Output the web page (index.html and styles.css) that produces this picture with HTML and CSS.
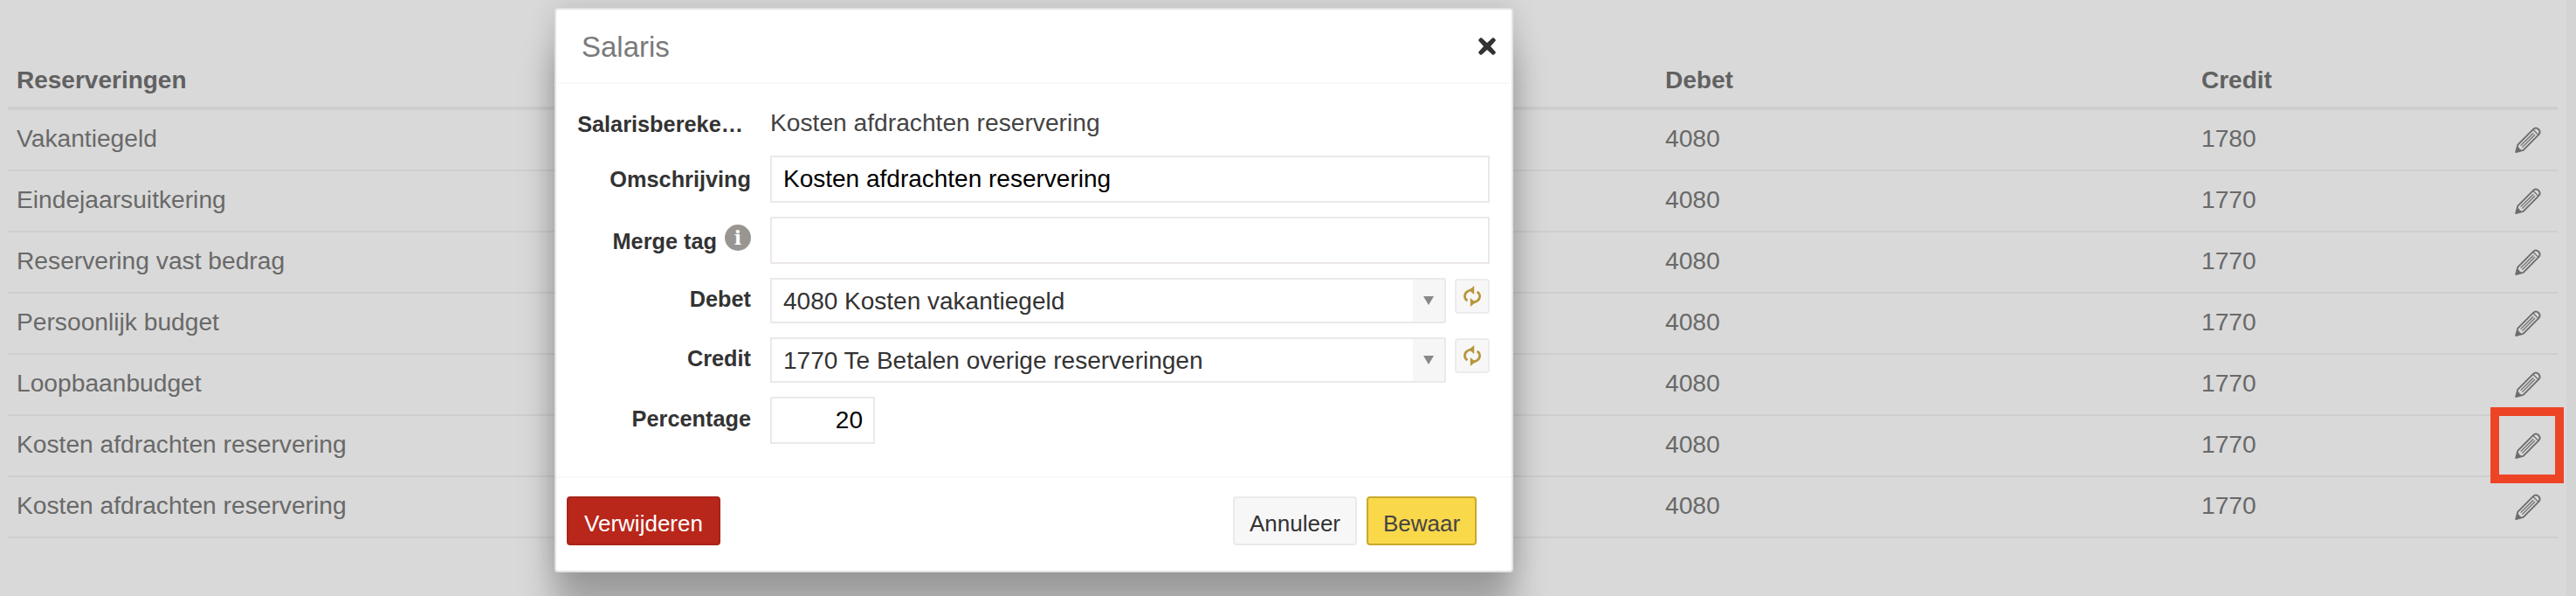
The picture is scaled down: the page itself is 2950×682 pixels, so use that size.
FILE: index.html
```html
<!DOCTYPE html>
<html lang="nl">
<head>
<meta charset="utf-8">
<title>Salaris</title>
<link rel="stylesheet" href="styles.css">
</head>
<body>
<svg class="sprites" width="0" height="0" aria-hidden="true">
  <symbol id="pencil" viewBox="0 0 30 30">
    <path d="M1.2 29 3.4 20.6 20.8 3.2C22.6 1.4 25.2 1.2 27.2 3 29 5 28.8 7.6 27 9.4L9.6 26.8Z" fill="none" stroke="currentColor" stroke-width="1.9" stroke-linejoin="round"/>
    <path d="M6.6 21.6 21.2 7.2M8.4 23.6 23 9M20.8 3.2 27 9.4" fill="none" stroke="currentColor" stroke-width="1.3"/>
    <path d="M1.2 29 2.6 23.4 4.6 23.4 5.6 25.4 7 26 7 27.6Z" fill="currentColor"/>
  </symbol>
  <symbol id="sync" viewBox="0 0 20 24">
    <path d="M11.5 5C6 4.4 1.4 7.4 1.4 12 1.4 14.2 2.4 15.8 4.4 17.2M8.5 19C14 19.6 18.6 16.6 18.6 12 18.6 9.8 17.6 8.2 15.6 6.8" fill="none" stroke="currentColor" stroke-width="2.7"/>
    <path d="M12.2 0 6.2 5 12.2 10ZM7.8 14 13.8 19 7.8 24Z" fill="currentColor"/>
  </symbol>
</svg>

<main class="page">
  <div class="table">
    <div class="row head"><span>Reserveringen</span><span>Debet</span><span>Credit</span><span></span></div>
    <div class="row"><span>Vakantiegeld</span><span>4080</span><span>1780</span><svg class="pencil"><use href="#pencil"/></svg></div>
    <div class="row"><span>Eindejaarsuitkering</span><span>4080</span><span>1770</span><svg class="pencil"><use href="#pencil"/></svg></div>
    <div class="row"><span>Reservering vast bedrag</span><span>4080</span><span>1770</span><svg class="pencil"><use href="#pencil"/></svg></div>
    <div class="row"><span>Persoonlijk budget</span><span>4080</span><span>1770</span><svg class="pencil"><use href="#pencil"/></svg></div>
    <div class="row"><span>Loopbaanbudget</span><span>4080</span><span>1770</span><svg class="pencil"><use href="#pencil"/></svg></div>
    <div class="row"><span>Kosten afdrachten reservering</span><span>4080</span><span>1770</span><svg class="pencil"><use href="#pencil"/></svg></div>
    <div class="row"><span>Kosten afdrachten reservering</span><span>4080</span><span>1770</span><svg class="pencil"><use href="#pencil"/></svg></div>
  </div>
</main>

<div class="overlay"></div>
<div class="highlight"></div>

<section class="modal">
  <header class="modal-head">
    <h2>Salaris</h2>
    <svg class="close" viewBox="0 0 20 20"><path d="M4 .6 10 6 16 .6C16.6 0 17.4 0 18 .6L19.4 2C20 2.6 20 3.4 19.4 4L14 10 19.4 16C20 16.6 20 17.4 19.4 18L18 19.4C17.4 20 16.6 20 16 19.4L10 14 4 19.4C3.4 20 2.6 20 2 19.4L.6 18C0 17.4 0 16.6.6 16L6 10 .6 4C0 3.4 0 2.6.6 2L2 .6C2.6 0 3.4 0 4 .6Z" fill="currentColor"/></svg>
  </header>
  <div class="modal-body">
    <div class="field static">
      <label class="truncated">Salarisbereke…</label>
      <div class="value">Kosten afdrachten reservering</div>
    </div>
    <div class="field">
      <label>Omschrijving</label>
      <div class="input">Kosten afdrachten reservering</div>
    </div>
    <div class="field">
      <label class="merge">Merge tag <span class="info">i</span></label>
      <div class="input"></div>
    </div>
    <div class="field pick">
      <label>Debet</label>
      <div class="select"><span>4080 Kosten vakantiegeld</span><i class="arrow"></i></div>
      <button class="sync"><svg><use href="#sync"/></svg></button>
    </div>
    <div class="field pick">
      <label>Credit</label>
      <div class="select"><span>1770 Te Betalen overige reserveringen</span><i class="arrow"></i></div>
      <button class="sync"><svg><use href="#sync"/></svg></button>
    </div>
    <div class="field percent">
      <label>Percentage</label>
      <div class="input number">20</div>
    </div>
  </div>
  <footer class="modal-foot">
    <button class="btn danger">Verwijderen</button>
    <div class="foot-right">
      <button class="btn plain">Annuleer</button>
      <button class="btn primary">Bewaar</button>
    </div>
  </footer>
</section>
</body>
</html>
```
FILE: styles.css
```css
* { box-sizing: border-box; }
html, body { margin: 0; height: 100%; }
body {
  width: 2950px;
  height: 682px;
  overflow: hidden;
  background: #fff;
  font-family: "Liberation Sans", Arial, sans-serif;
  font-size: 28px;
  position: relative;
}
.sprites { position: absolute; }

.page { padding: 0 21px 0 9px; }
.page::after {
  content: "";
  position: absolute;
  top: 0; right: 0; bottom: 0;
  width: 11px;
  background: #fafafa;
}
.table { display: flex; flex-direction: column; }
.row {
  display: grid;
  grid-template-columns: 1888px 614px 1fr 49px;
  align-items: center;
  height: 70px;
  padding: 0 0 0 10px;
  border-bottom: 2px solid #f3f3f3;
  color: #7c7c7c;
  font-size: 28.2px;
}
.row > span { padding-bottom: 4px; }
.row.head {
  height: 126px;
  padding-top: 66px;
  padding-bottom: 4px;
  border-bottom: 4px solid #f3f3f3;
  font-weight: bold;
  color: #727272;
  font-size: 28px;
}
.row.head > span { padding-bottom: 0; }
.pencil { width: 30px; height: 30px; color: #808080; }

.overlay { position: absolute; inset: 0; background: rgba(0,0,0,.15); }
.highlight {
  position: absolute;
  left: 2852px; top: 466px;
  width: 84px; height: 87px;
  border: 10px solid #ee4426;
}

.modal {
  position: absolute;
  left: 635px; top: 9px;
  width: 1098px;
  height: 646px;
  background: #fff;
  border: 2px solid #e2e2e2;
  border-radius: 4px;
  box-shadow: 0 50px 40px rgba(0,0,0,.25), 0 0 30px rgba(0,0,0,.14);
  display: flex;
  flex-direction: column;
  color: #333;
}
.modal-head {
  height: 85px;
  margin: 0 2px;
  padding: 3px 16px 0 27px;
  border-bottom: 2px solid #f8f8f8;
  display: flex;
  align-items: center;
  justify-content: space-between;
}
.modal-head h2 { margin: 0; font-size: 33px; font-weight: normal; color: #7a7a7a; }
.close { width: 20px; height: 20px; color: #333; margin-top: -3px; }

.modal-body {
  flex: 1;
  padding-top: 16px;
  display: flex;
  flex-direction: column;
  gap: 16px;
}
.field {
  display: grid;
  grid-template-columns: 223px 824px;
  column-gap: 22px;
  height: 54px;
  align-items: center;
}
.field.static { height: 50px; padding-top: 6px; }
.field.pick { grid-template-columns: 223px 774px 40px; height: 52px; }
.field label {
  font-size: 25.3px;
  font-weight: bold;
  text-align: right;
  display: flex;
  justify-content: flex-end;
  align-items: center;
  gap: 9px;
}
.truncated { padding-right: 9px; padding-top: 5px; }
.merge { padding-top: 2px; }
.field.pick label, .field.percent label { padding-bottom: 3px; }
.value { font-size: 28.2px; color: #444; }
.input {
  height: 54px;
  border: 2px solid #ece8ea;
  padding: 0 13px;
  line-height: 50px;
  color: #000;
}
.input.number { width: 120px; text-align: right; padding-right: 12px; }
.info {
  width: 30px; height: 30px;
  border-radius: 50%;
  background: #999692;
  color: #fff;
  font-family: "DejaVu Serif", serif;
  font-size: 22px;
  font-weight: bold;
  line-height: 30px;
  text-align: center;
  margin-top: -8px;
}
.select {
  height: 52px;
  border: 2px solid #ece8ea;
  border-radius: 0 2px 2px 0;
  padding-left: 13px;
  display: flex;
  align-items: center;
  justify-content: space-between;
  color: #333;
}
.select span { padding-top: 2px; }
.arrow {
  width: 36px;
  height: 100%;
  background: #f7f6f7;
  display: flex;
  align-items: center;
  justify-content: center;
}
.arrow::after {
  content: "";
  border-left: 6px solid transparent;
  border-right: 6px solid transparent;
  border-top: 10px solid #888;
}
.sync {
  width: 40px; height: 40px;
  margin: 0 0 10px -12px;
  padding: 0;
  background: #f8f7f8;
  border: 2px solid #ececec;
  border-radius: 4px;
  color: #b8973c;
  display: flex;
  align-items: center;
  justify-content: center;
}
.sync svg { width: 20px; height: 24px; }

.modal-foot {
  height: 108px;
  border-top: 2px solid #f8f8f8;
  padding: 21px 40px 29px 12px;
  display: flex;
  justify-content: space-between;
}
.foot-right { display: flex; gap: 11px; }
.btn {
  font-family: inherit;
  font-size: 26px;
  height: 56px;
  padding: 6px 0 0;
  border-radius: 4px;
  border: 2px solid;
}
.danger { width: 176px; background: #b9261a; border-color: #a8241a; color: #fff; }
.plain { width: 142px; background: #f8f7f8; border-color: #ece9ea; color: #333; }
.primary { width: 126px; background: #f9d84a; border-color: #c9a92c; color: #444; }
```
